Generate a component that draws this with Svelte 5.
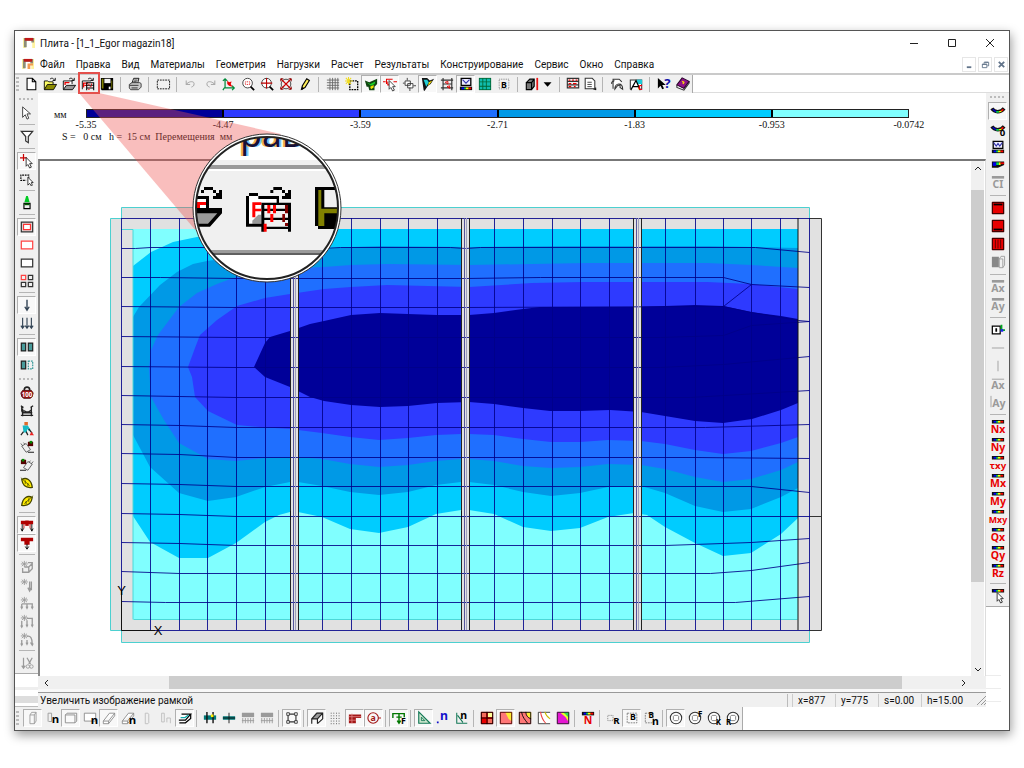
<script>
  // icon parts: fill, stroke and text, all on a 16x16 grid
  const f = (d, fill) => ({ d, fill, stroke: 'none', w: 0 });
  const s = (d, stroke = '#000', w = 1, fill = 'none') => ({ d, fill, stroke, w });
  const t = (text, x, y, color = '#000', size = 9) => ({ text, x, y, color, size });

  const red = '#e80000';
  const gray = '#9a9a9a';

  const arrow = 'M3 1v12l3-3 2 5 2-1-2-5h4z';
  const smallArrow = 'M7 4v10l2-2 2 4 2-1-2-4h3z';
  const folder = [s('M1.5 14V4.5h4l1 1h5V8', '#000', 1, '#ff6'), s('M1.5 14.500L5 8.500h10.500L12 14.500z', '#000', 1, '#8a8a00'), s('M8 2.500c2-2 4-1 5 1M11 4h3V1')];
  const folderRed = [s('M1.5 14V4.500h10V8', '#000', 1, '#fff'), s('M3.500 9V6.500h5', red, 1.500), s('M1.500 14.500L5 9.500h10.500L12 14.500z', '#000', 1, '#999'), s('M8 2.500c2-2 4-1 5 1M11 4h3V1')];
  const rainbow = (y) => [f(`M1 ${y}h14v4H1z`, '#111'), f(`M3 ${y + 1}h3v2H3z`, '#00f'), f(`M6 ${y + 1}h2v2H6z`, '#0c6'), f(`M8 ${y + 1}h3v2H8z`, '#ff0'), f(`M11 ${y + 1}h3v2h-3z`, '#f00')];
  const result = (label, size = 12) => [...rainbow(0), t(label, 8, 15, red, size)];
  const swoosh = [s('M1 5c3 5 10 5 14 0', '#111', 4), s('M2 6c2 2 3 3 5 3', '#00c', 1.500), s('M6 9h3', '#0c4', 2), s('M9 9c2 0 3-1 4-2', '#ff0', 1.500), s('M12 8l2-2', '#f00', 2)];
  const ghostBox = s('M4.500 4.500h5v10h-5zM4.500 4.500l2-3h5v10l-2 3M9.500 4.500l2-3', '#999');
  const slab = s('M1.500 4.500h11v9h-11zM1.500 4.500l2-2h11v9l-2 2', '#888', 1, '#fafafa');
  const slope = s('M1.500 11.500l7-9h6v3l-7 9h-6zM1.500 11.500h6l7-9M7.500 11.500v3', '#888', 1, '#fff');
  const frame = f('M1 3h14v4h-3v5h-1V7H5v5H4V7H1z', '#b00000');
  const lens = [s('M2 7a5.500 5.500 0 1 0 11 0a5.500 5.500 0 1 0-11 0', '#333', 1, '#fff'), s('M11 11l4 4', '#000', 2)];
  const ghostLoad = (d) => [s('M2 2l6 5M8 2L2 7M5 1v7M1 4.500h8', gray), s(d, gray, 1.5)];
  const dozer = [s('M1 4l7 9M4 3l7 8', '#555', 1, '#eee'), s('M2 7l5-3 5 7-5 3z', '#555', 1, '#eee'), s('M9 14h7'), f('M9 2h6v5H9z', '#500'), f('M11 1h3v3h-3z', '#080')];
  const leaf = [s('M2 4c5-3 11 0 12 9C7 14 3 11 2 4z', '#440', 1.500, '#ffeb00'), s('M1 2l10 9M6 5v4M9 8v4', '#550')];
  const calc = [f('M1 1h14v14H1z', red), s('M1.500 1.500h13v13h-13z')];
  const ring = [s('M1.500 8a6.500 6.500 0 1 0 13 0a6.500 6.500 0 1 0-13 0', '#333', 1.200, '#fff'), s('M6 5h4l1 1v4l-1 1H6l-1-1V6z', '#777')];
  const bigFrame = (color) => s('M1.500 3.500h13v9h-13z', color, 1.400, '#fff');

  const icons = {
    new: [s('M3.500 1.500h6l4 4v9h-10zM9.500 1.500v4h4', '#000', 1.200, '#fff')],
    open: folder,
    openRed: folderRed,
    openGrid: [s('M1.500 14V4.500h10', '#000', 1, '#fff'), s('M3 12V7h5M4 9.500h3', red, 1.500), s('M6.500 6v9M14.500 6v9M6 6.500h9M6 9.500h9M6 12.500h9', '#000', 1.200), s('M9 7.500v2M12 7.500v2M10 11h2M8 14h2', red), s('M8 2.500c2-2 4-1 5 1M11 4h3V1')],
    save: [f('M1 1h14v14H2l-1-1z', '#000'), f('M2 2h2v11H2zM13 4h1v9h-1z', '#808000'), f('M5 2h7v5H5z', '#f4f4f4'), f('M10 11h2v3h-2z', '#fff')],
    print: [s('M4.500 7l2-5.500h6L11 7', '#000', 1, '#fff'), s('M1.500 8.500l3-2h9l1.500 1v4l-3 3h-9l-1.500-2z', '#333', 1, '#ccc'), s('M2 9.500h10M4 12.500h7', '#222'), s('M7 3.500h4M6 5.500h4')],
    marquee: [{ ...s('M1.500 3.500h14v10h-14z'), dash: '2 1' }],
    undo: [s('M2.500 4v4.500H7M2.500 8.500c3-4 9-4 9-1s-1 3-3 4', gray, 1)],
    redo: [s('M13.500 4v4.500H9M13.500 8.500c-3-4-9-4-9-1s1 3 3 4', gray, 1)],
    axes: [s('M3.500 2v10.500h10M1 4.500L3.500 2 6 4.500M3 12l-2 3M11.500 10l2.500 2.500-2.500 2.500', '#008a3a', 1.400), f('M6 4l2 2 3-1-1 3 2 3-4-1-2-2z', red)],
    zoom: [...lens, { ...s('M5 5.500h5v3H5z', '#d00'), dash: '1 1' }],
    zoomAll: [...lens, s('M1 7h13M7.500 1v12', '#b00', 1.200)],
    zoomOut: [s('M2.500 8a5 5 0 1 0 11 0a5 5 0 1 0-11 0', '#333'), s('M2 2l12 12M14 2L2 14', '#c00', 1.300), s('M2 2h3M2 2v3M14 2h-3M14 2v3M2 14h3M2 14v-3M14 14h-3M14 14v-3', '#700')],
    pencil: [s('M4 14l1-4 5-8 3 2-5 8z', '#000', 1.300, '#ffef5a'), f('M4 15l1-4 2 2z', '#000')],
    grid: [s('M4.500 1v14M7.500 1v14M10.500 1v14M13.500 1v14M1 3.500h14M1 6.500h14M1 9.500h14M1 12.500h14', '#666')],
    gridNew: [{ ...s('M5.500 4.500h9v10h-9z', '#000', 1.500), dash: '2 1' }, s('M4 0v9M0 4.500h9M1 1l6 7M7 1L1 8', '#f0dc20', 1.200)],
    model: [f('M1 4l5 2 9-4v6l-3 3v4H6l-1-4H3z', '#141'), f('M3 6l4 2 6-3-1 3-4 2z', '#19d024'), f('M7 11l4-2v3l-3 2z', '#f2e400')],
    nodePick: [s('M0 5.500h3M12 5.500h4M4 8V2.500h7', red, 1.200), s('M5.500 5v4h2', red, 1.200), s(smallArrow, '#333', 1, '#fff')],
    nodeShape: [s('M3.500 4.500h6v5h-6zM6.500 7.500h6v5h-6z', '#333', 1, '#fff'), s('M1 7h2M13 10h3M6 1v3M9 12v4', '#333')],
    flag: [f('M1 1h6l3 3 5-2-4 6-3 2-4 6-1-1z', '#111'), f('M3 3h4l2 3-3 5z', '#23cdd6'), f('M9 6l4-2-3 4-2 2z', '#ffe600')],
    frames: [s('M3.500 1v14M13.500 1v14M1 3.500h14M1 12.500h14M3 8h10', '#333', 1.300), s('M6 6l3-1v3zM8 11l3-1v3z', red)],
    scale: [s('M2.500 1.500h11v8h-11z', '#000', 1.500, '#eef'), s('M4 3l4 4 4-4', '#33a', 1.300), ...rainbow(11)],
    mesh: [f('M1 1h14v14H1z', '#063'), f('M2 2h3v3H2zM6 2h3v3H6zM10 2h4v3h-4zM2 6h3v4H2zM6 6h3v4H6zM10 6h4v4h-4zM2 11h3v3H2zM6 11h3v3H6zM10 11h4v3h-4z', '#10bcae')],
    blockB: [{ ...s('M2.500 2.500h11v11h-11z', '#777'), dash: '1 1' }, t('B', 8, 12, '#000', 10)],
    cube: [s('M1.500 6.500h6v8h-6zM1.500 6.500l4-4h5v8l-3 4M7.500 6.500l3-4', '#000', 1.300, '#777'), f('M13 1h2v14h-2z', '#ee1515')],
    drop: [f('M3 6h9l-4.500 5z', '#000')],
    spec: [s('M1.500 1.500h13v11h-13zM1 5h14M1 9h14', '#333', 1.300), s('M3 3.500h2M7 3.500h2M11 3.500h2M3 7.500h3M8 7.500h4M3 11h3M9 11h2', red, 1.500)],
    report: [s('M2.500 1.500h8l3 3v9h-11z', '#333', 1.200, '#fff'), s('M5 6h5M5 8.500h5M5 11h5', '#333'), s('M12 14h3M14.500 12v3')],
    copyView: [s('M3.500 13.500V2.500h7l3 3', '#333', 1.200, '#fff'), s('M2 8v-2l3-2', '#333', 1.200), s('M5.500 14c0-8 9-8 9 0l-3-2v-3l-3 1z', '#333', 1.200, '#fff')],
    compass: [s('M1.500 14V3.500h13V14', '#333', 1.200, '#fff'), f('M9 3h6v5H9z', '#19c9d8'), s('M2 15L8 4l5 11M4 11h7', '#000', 1.400), t('c', 13, 15, red, 10)],
    help: [f('M1 1v12l3-3 2 4 2-1-2-4h4z', '#000'), t('?', 12, 12, '#1111a8', 15)],
    book: [s('M1 9v3l8 3 6-8V5', '#333', 1.200, '#fff'), s('M1 9l6-8 8 4-6 8z', '#2a002a', 1.200, '#8e1388'), s('M7 5l2 1-1 2', '#ffe100', 1.500)],

    cursor: [s(arrow, '#333', 1, '#fff')],
    filter: [s('M1.500 1.500h13l-5 6v7l-3-2v-5z', '#333', 1.400, '#fff')],
    pickNode: [s('M4 0v8M0 4.500h8', '#c00', 1.400), s(smallArrow, '#222', 1, '#fff')],
    pickRect: [{ ...s('M10 7V3.500H1v6h6', '#000', 1.300), dash: '2 1' }, s('M9 6v9l2-2 2 3 1-1-1-3h2z', '#222', 1, '#fff')],
    brush: [f('M7 0h2l2 7H5z', '#0c2'), s('M4.500 8.500h7v6h-7z', '#000', 1.300, '#eee'), s('M5 9.500h6', '#050', 2)],
    plateHole: [s('M1.500 2.500h13v11h-13z', '#333', 1.400, '#ddd'), s('M4 5h8v6H4z', '#f33', 1.400, '#fff')],
    plateRed: [bigFrame('#f44')],
    plate: [bigFrame('#333')],
    plates: [s('M1.500 1.500h5v5h-5z', '#f44', 1.400), s('M9.500 1.500h5v5h-5zM1.500 9.500h5v5h-5zM9.500 9.500h5v5h-5z', '#333', 1.400)],
    load: [s('M8 2v12M5.500 10L8 14l2.500-4', '#345', 1.600)],
    loads: [s('M3 2v12M1 11l2 3 2-3M8 2v12M6 11l2 3 2-3M13 2v12M11 11l2 3 2-3', '#345', 1.300)],
    pair: [s('M1.500 3.500h5v9h-5zM9.500 3.500h5v9h-5z', '#222', 1.400, '#489b9b')],
    pairCut: [s('M1.500 3.500h5v9h-5z', '#222', 1.400, '#489b9b'), { ...s('M9.500 3.500h5v9h-5z', '#3a9a9a', 1.400), dash: '2 1' }],
    weight: [s('M5 5c-1-5 7-5 6 0', '#222', 2), s('M3 5h10l2 3-1 4-2 2H4l-2-2-1-4z', '#400', 1, '#a31616'), t('100', 8, 12, '#fff', 7)],
    castle: [s('M2 3v5h3l2 1h3l3-2V3M2 10h12M1 13h14M3 5v9M13 5v9M1 2l3 2M15 2l-3 2', '#222', 1.500)],
    digger: [f('M5 0h4v4H5z', '#e06a2a'), f('M3 4h6l3 5-2 1-2-2v4H4z', '#17b9c4'), s('M4 11l-3 4M7 11l2 4M10 8l4 5', '#222', 1.400), f('M11 15l2-4 3 4z', '#e22')],
    dozer,
    dozerBack: dozer,
    leaf,
    leafBack: leaf,
    frameLoad: [frame, f('M6 3h4v6H6z', '#b00000'), s('M2.500 7v8M1 12l1.500 3L4 12M13.500 7v8M12 12l1.500 3 1.500-3')],
    tLoad: [f('M1 2h14v4h-4v4H5V6H1z', '#b00000'), s('M8 9v6M6 12l2 3 2-3')],
    gLoad1: ghostLoad('M3 9v5h7l4-4V3H9M10 14V8l4-4M5 8h5'),
    gLoad2: ghostLoad('M11 4v10M9 11l2 4 2-4M13 4v10'),
    gLoad3: ghostLoad('M2 9h12v5M8 9v5M2 9v5M1 12l1 2 1-2M7 12l1 2 1-2M13 12l1 2 1-2'),
    gLoad4: ghostLoad('M2 8v7M8 7v7M8 5h6v9M1 13l1 2 1-2M7 12l1 2 1-2M13 12l1 2 1-2'),
    gLoad5: ghostLoad('M2 9v5M8 9v5M8 5c4-1 6 2 6 9M1 13l1 2 1-2M7 12l1 2 1-2M12 12l2 3 1-2'),
    cutLoad: [s('M4 2v12M2 11l2 3 2-3M8 2l4 7M14 2l-4 7', gray, 1.400), s('M7 12a2 2 0 1 0 4 0a2 2 0 1 0-4 0M11 12a2 2 0 1 0 4 0a2 2 0 1 0-4 0', gray)],

    swoosh,
    swooshZero: [...swoosh, t('0', 13, 16, '#000', 11)],
    envelope: [s('M2.500 1.500h11v8h-11z', '#000', 1.500, '#eef'), s('M3 3l3 4 2-3 2 3 3-4', '#33a', 1.300), ...rainbow(11)],
    wedge: [f('M1 4h14v4l-7 3H1z', '#111'), f('M2 5h4v4H2z', '#00e'), f('M6 5h3v3H6z', '#0d5'), f('M9 5h2v3H9z', '#fe0'), f('M11 5h4v2h-4z', '#e00')],
    ci: [f('M1 0h14v3H1z', gray), t('CI', 8, 14, gray, 12)],
    topBars: [...calc, s('M3 4h10', '#000', 2)],
    bottomBars: [...calc, s('M3 12h10', '#000', 2)],
    sideBars: [...calc, s('M5 3v10M8 3v10M11 3v10', '#500')],
    greyBox: [f('M1 2h8v12H1z', '#888'), s('M9.500 4.500h4v10h-4zM9.500 4.500l2-3h4v10l-2 3', gray)],
    axTop: [f('M1 0h14v3H1z', gray), t('Ax', 8, 14, gray, 12)],
    ayTop: [f('M1 0h14v3H1z', gray), t('Ay', 8, 14, gray, 12)],
    lBox: [s('M1.500 3.500h9v9h-9z', '#000', 1.400, '#fff'), f('M5 6h2v4H5z', '#000'), s('M12 2v6h4', '#0a2', 2), f('M11 7h3v3h-3z', '#22e')],
    lineH: [s('M1 8h14', gray)],
    lineV: [s('M8 2v12', gray)],
    axBar: [s('M1 2.500h14', gray), t('Ax', 8, 14, gray, 12)],
    ayBar: [s('M0 1v13', gray), t('Ay', 9, 14, gray, 12)],
    nx: result('Nx'), ny: result('Ny'), txy: result('τxy', 11), mx: result('Mx'), my: result('My'),
    mxy: result('Mxy', 10), qx: result('Qx'), qy: result('Qy'), rz: result('Rz'),
    pickResult: [...rainbow(0), s(smallArrow, '#222', 1, '#fff')],

    col: [ghostBox],
    colN: [s('M3.500 12V2.500h4v9M4 12h4', '#999'), t('n', 12, 14, '#000', 13)],
    slab: [slab],
    slabN: [s('M1.500 2.500h13v9h-13z', '#888', 1, '#fff'), t('n', 13, 15, '#000', 13)],
    beam: [slope],
    beamN: [slope, t('n', 13, 15, '#000', 13)],
    pile: [s('M6 2.500h3l1 1v10l-1 1H6z', '#bbb')],
    pileN: [s('M3 2.500h3v10H3zM9 13V8h4v6', '#bbb')],
    layer: [s('M1.500 13.500h7l6-5v-5', '#000', 1.400, '#fff'), s('M4 3.500h10.500l-6 7H1', '#000', 1.400, '#fff'), s('M3 7.500h5l4-3', '#1aa', 1.500)],
    rebar1: [f('M1 5h14v5H1z', '#077'), s('M4.500 1v13M11.500 1v13', '#111', 1.600), f('M9 4h3v3H9z', '#fe0')],
    rebar2: [f('M1 6h14v4H1z', '#077'), s('M8 2v12M1 8h14', '#111')],
    rebar3: [f('M1 2h14v5H1z', gray), s('M2 8v6M5 8v6M8 8v6M11 8v6M14 8v6M1 11h14', gray)],
    corners: [s('M3.500 3.500h9v9h-9z', '#333', 1.300), s('M2 2h3v3H2zM11 2h3v3h-3zM2 11h3v3H2zM11 11h3v3h-3z', '#333', 1, '#fff')],
    arch: [f('M1 9l6-7h8l-6 7z', '#999'), s('M2 14.500V9l6-6.500h6.500V9M2 9h6.500v5.500M8.500 9l6-6.500M8.500 14.500l6-5.500', '#222', 1.300)],
    dots: [{ ...s('M2 2.500h12M2 5.500h12M2 8.500h12M2 11.500h12M2 14.500h12', '#444'), dash: '1 2' }],
    hatch: [f('M1 4h14v4H9v6H1z', '#a31818'), s('M1 6.500h14M1 10.500h8M4.500 3v11', '#e08080')],
    at: [s('M1 8a6 6 0 1 0 12 0a6 6 0 1 0-12 0M13 8h3', '#a31818', 1.300), t('a', 7, 11, '#a31818', 10)],
    forces: [s('M1 8V3h13v4M8 3v11M5 7h6M6 11l2 3 2-3', '#070', 1.600), t('F', 13, 15, '#000', 10)],
    triangle: [s('M2 1v13h13z', '#175', 1.300, '#cfe8cf'), s('M5 7v4h4z', '#175')],
    dotN: [f('M1 12h2v2H1z', '#11c'), t('n', 9, 10, '#11c', 14)],
    angleN: [s('M2 2v12h12M3 5l6 8', '#175', 1.200), t('n', 10, 9, '#000', 12)],
    map1: [f('M1 1h14v14H1z', red), f('M9 2h5v5H9z', '#ff9'), f('M2 2h5v5H2zM9 9h5v5H9z', '#f46d5d'), s('M1.500 1.500h13v13h-13zM8 1v14M1 8h14')],
    map2: [f('M1 1h14v14H1z', '#f77'), f('M7 1h8v11l-4-3-2-4z', '#fe3'), s('M1.500 1.500h13v13h-13z', '#400')],
    map3: [f('M1 1h14v14H1z', '#f77'), f('M9 1h6v8l-4-3z', '#fe3'), s('M4 1c1 6 4 9 7 13M9 1c0 5 3 7 6 8M1.500 1.500h13v13h-13z')],
    map4: [s('M15 1.500H1.500v13H15', '#333', 1, '#fff'), s('M4 1c1 6 3 10 6 13', '#e44', 1.200), s('M9 1c1 4 3 6 6 8', '#cb0', 1.200)],
    map5: [f('M1 1h14v14H1z', '#e516d2'), f('M5 2h9v10l-3-5z', '#ef2'), f('M8 1h7v7z', '#3d5'), s('M1.500 1.500h13v13h-13z', '#222')],
    resultN: [...rainbow(1), t('N', 8, 15, red, 12)],
    circleR: [{ ...s('M2 5h6v6H2z', '#777'), dash: '1 1' }, t('R', 12, 15, '#000', 11)],
    boxB: [{ ...s('M2.500 2.500h11v11h-11z', '#777'), dash: '2 1' }, t('B', 9, 10, '#000', 10)],
    boxBn: [{ ...s('M1.500 2.500h9v11h-9z', '#777'), dash: '2 1' }, t('B', 8, 8), t('n', 13, 16, '#000', 12)],
    ring,
    ringF: [...ring, t('F', 14, 7)],
    ringK: [...ring, t('K', 13, 16)],
    ringR: [...ring, t('R', 3, 16)]
  };

  // '|' is a separator, '*' marks a pressed button
  function parse(list) {
    return list.split(' ').map((name) => {
      if (name === '|') return { sep: true };
      return { name: name.replace('*', ''), on: name.endsWith('*') };
    });
  }

  let topTools = $state(parse('new open openRed openGrid save | print | marquee | undo redo axes zoom zoomAll zoomOut pencil | grid gridNew model* nodePick* nodeShape flag* frames scale* mesh blockB | cube drop | spec report | copyView compass | help book'));
  let leftTools = $state(parse('cursor | filter | pickNode* pickRect | brush | plateHole* plateRed plate plates | load* loads | pair* pairCut'));
  let leftTools2 = $state(parse('weight castle digger dozer dozerBack leaf leafBack | frameLoad* tLoad* | gLoad1 gLoad2 gLoad3 gLoad4 gLoad5 | cutLoad'));
  let rightTools = $state(parse('swoosh* swooshZero envelope wedge ci | topBars bottomBars sideBars greyBox | axTop ayTop | lBox lineH lineV axBar ayBar | nx ny txy mx my mxy qx qy rz | pickResult'));
  let bottomTools = $state(parse('col* colN slab* slabN beam* beamN pile pileN layer* | rebar1 rebar2 rebar3 rebar3 | corners* | arch* dots hatch* at* | forces* | triangle* dotN angleN | map1 map2* map3 map4 map5 | resultN | circleR boxB* boxBn | ring* ringF ringK ringR'));

  const menu = ['Файл', 'Правка', 'Вид', 'Материалы', 'Геометрия', 'Нагрузки', 'Расчет', 'Результаты', 'Конструирование', 'Сервис', 'Окно', 'Справка'];

  const colors = ['#000099', '#2e3aff', '#1f6fff', '#0099e6', '#00ccff', '#80ffff'];
  const levels = ['-5.35', '-4.47', '-3.59', '-2.71', '-1.83', '-0.953', '-0.0742'];
  const readings = ['x=877', 'y=775', 's=0.00', 'h=15.00'];

  // deflection zones, from the outer one to the deepest
  const zones = [
    { color: colors[4], points: '133,266 151,252 173,242 197,237 230,229 798,229 798,518 781,534 751,553 723,556 695,543 665,527 647,515 634,513 608,517 580,528 551,531 523,527 494,514 469,510 461,510 436,514 408,527 379,533 350,529 322,517 298,512 290,512 279,515 265,522 236,543 208,558 179,558 150,542 133,516' },
    { color: colors[3], points: '133,317 139,307 160,285 177,272 193,264 207,261 265,253 324,249 351,247 380,246 469,247 567,246 708,246 755,247 798,248 798,488 781,497 751,509 723,512 695,506 665,493 641,486 633,486 608,487 580,493 551,496 523,492 494,485 469,482 461,482 436,485 408,492 379,495 350,492 322,486 298,482 290,482 265,487 236,497 208,501 179,493 150,467 133,435' },
    { color: colors[2], points: '149,368 151,350 158,335 179,307 197,293 217,284 233,278 265,272 298,268 324,267 351,265 387,264 469,265 532,264 587,263 707,263 751,265 798,268 798,462 781,470 751,479 723,482 695,477 665,469 641,465 608,464 580,467 551,468 523,466 494,461 469,459 461,459 436,461 408,465 379,467 350,464 322,459 298,457 290,457 265,458 236,461 208,459 179,443 164,420 151,397' },
    { color: colors[1], points: '188,367 195,348 200,335 217,320 237,306 265,298 290,294 324,289 351,287 387,285 469,287 532,283 583,282 707,282 751,284 798,289 798,437 781,443 751,451 723,454 695,450 665,444 641,441 608,440 580,442 551,442 523,439 494,435 469,434 461,434 436,435 408,438 379,440 350,437 322,433 290,429 260,427 237,425 208,411 195,397 192,377' },
    { color: colors[0], points: '254,367 265,343 270,337 290,331 310,324 324,321 351,315 380,313 408,314 437,315 469,315 494,313 523,309 540,307 633,307 665,306 695,305 723,306 751,312 781,316 798,319 798,403 781,410 752,419 723,423 695,421 665,416 641,412 610,410 580,411 550,411 523,408 494,404 469,402 437,403 408,406 380,407 351,405 324,401 310,397 290,387 265,377' }
  ];

  const columns = [150, 179, 207, 236, 265, 322, 351, 380, 408, 437, 494, 523, 552, 580, 609, 665, 695, 723, 751, 780];
  const ribs = [290, 461, 633];
  const rows = [
    '121,218 809,218',
    '121,248 135,248 150,247 208,247 236,248 322,248 340,247 450,247 465,248 480,247 755,247 809,252',
    '121,277 160,277 236,278 465,278 540,277 723,277 751,284 809,287',
    '121,306 236,307 465,307 723,306 751,312 798,320 809,321',
    '121,336 236,337 660,337 723,335 751,325 809,321',
    '121,366 236,367 660,367 723,364 809,356',
    '121,395 236,397 690,397 809,390',
    '121,424 179,425 236,427 705,427 809,424',
    '121,453 179,454 236,457 695,457 809,458',
    '121,483 179,484 236,486 751,486 809,492',
    '121,513 179,514 236,516 809,516',
    '121,542 179,543 236,545 665,545 751,542 809,538',
    '121,571 179,573 710,573 751,570 809,562',
    '121,601 165,602 735,602 809,596',
    '121,630 809,630'
  ];
</script>

{#snippet icon(name)}
  <svg class="icon" class:flip={name.endsWith('Back')} viewBox="0 0 16 16" aria-hidden="true">
    {#each icons[name] as part}
      {#if part.text}
        <text x={part.x} y={part.y} fill={part.color} font-size={part.size} text-anchor="middle">{part.text}</text>
      {:else}
        <path d={part.d} fill={part.fill} stroke={part.stroke} stroke-width={part.w} stroke-dasharray={part.dash} />
      {/if}
    {/each}
  </svg>
{/snippet}

{#snippet buttons(tools)}
  {#each tools as tool}
    {#if tool.sep}
      <span class="sep"></span>
    {:else}
      <button class="tool {tool.name}" class:on={tool.on} aria-label={tool.name} onclick={() => (tool.on = !tool.on)}>
        {@render icon(tool.name)}
      </button>
    {/if}
  {/each}
{/snippet}

{#snippet logo(tail)}
  <svg class="logo" viewBox="0 0 13 13" aria-hidden="true">
    <path d="M0 1h3v11H0zM10 1h3v11h-3z" fill="#fff3a0" />
    <path d="M1 1h11v5h-3V4H4v7H1z" fill="#8d8d78" />
    <path d="M2 1h9v3H2z" fill="#c01818" />
    {#if tail}<path d="M6 6h6v2H9v4H6z" fill="#f29b50" />{/if}
  </svg>
{/snippet}

<div class="desktop">
  <main class="window">
    <header class="titlebar">
      {@render logo(false)}
      <span class="title">Плита - [1_1_Egor magazin18]</span>
      <button aria-label="Свернуть"><svg viewBox="0 0 10 10"><path d="M1 5.500h8" /></svg></button>
      <button aria-label="Развернуть"><svg viewBox="0 0 10 10"><path d="M1.500 1.500h7v7h-7z" /></svg></button>
      <button aria-label="Закрыть"><svg viewBox="0 0 10 10"><path d="M1 1l8 8M9 1L1 9" /></svg></button>
    </header>

    <nav class="menu">
      {@render logo(true)}
      {#each menu as item}
        <button>{item}</button>
      {/each}
      <div class="mdi">
        <button aria-label="Свернуть документ"><svg viewBox="0 0 10 10"><path d="M2 8h5" stroke-width="2" /></svg></button>
        <button aria-label="Восстановить документ"><svg viewBox="0 0 10 10"><path d="M3.500 4V2.500h5v4H7M1.500 4.500h5v4h-5zM1.500 5h5M4 2.500h4" /></svg></button>
        <button aria-label="Закрыть документ"><svg viewBox="0 0 10 10"><path d="M2 2l6 6M8 2L2 8" stroke-width="2" /></svg></button>
      </div>
    </nav>

    <div class="bar top">
      <div class="strip">
        <span class="grip"></span>
        {@render buttons(topTools)}
      </div>
    </div>

    <div class="work">
      <aside class="dock left">
        <div class="stack">
          <span class="grip"></span>
          {@render buttons(leftTools)}
          <span class="grip second"></span>
          {@render buttons(leftTools2)}
        </div>
        <div class="rest"></div>
      </aside>

      <section class="document">
        <div class="legend">
          <span class="unit">мм</span>
          <div>
            <div class="band">
              {#each colors as color}
                <i style="background: {color}"></i>
              {/each}
            </div>
            <div class="levels">
              {#each levels as level}
                <span>{level}</span>
              {/each}
            </div>
          </div>
          <p>S =&nbsp;&nbsp; 0 см&nbsp;&nbsp; h =&nbsp; 15 см&nbsp; Перемещения&nbsp; мм</p>
        </div>

        <div class="view">
          <div class="canvas">
            <svg class="plan" width="714" height="440" viewBox="109 205 714 440">
              <path d="M121.500 207.500h688v11h12v412h-12v12h-688v-12h-11v-412h11z" fill="#e1e1e1" />
              <path d="M809.500 218.500v-11h-688v11h-11v412h11v12h688v-12" fill="none" stroke="#4cd0d0" />
              <path d="M809 218.500h12.500v412H809M809 516.500h12" fill="none" stroke="#333" />
              <rect x="133" y="229" width="665" height="390" fill="#80ffff" />
              {#each zones as zone}
                <polygon points={zone.points} fill={zone.color} />
              {/each}
              <path d="M133.500 619.500h664M121 229.500h12v390" fill="none" stroke="#4cd8d8" />
              {#each ribs as x}
                <rect {x} y="218" width="9" height="412" fill="#e1e1e1" />
              {/each}
              <g class="lines">
                {#each columns as x}
                  <path d="M{x + 0.5} 218v412" />
                {/each}
                {#each rows as points}
                  <polyline {points} transform="translate(.5 .5)" />
                {/each}
                <path d="M121.500 218v412M809.500 218v412M723.500 306.500l28-22" />
              </g>
              {#each ribs as x}
                <path d="M{x + 0.5} 218v412M{x + 8.5} 218v412" stroke="#222" />
                <path d="M{x + 3.5} 218v412" stroke="#55559c" />
                <path d="M{x + 5.5} 218v412" stroke="#a0a0bc" />
              {/each}
              <path d="M798 218v412M121.500 590v40.500H155M290.500 511v9M461.500 511v9" fill="none" stroke="#111" />
              <text x="121.500" y="595" text-anchor="middle">Y</text>
              <text x="158" y="635" text-anchor="middle">X</text>
            </svg>
          </div>
          <div class="vscroll">
            <button aria-label="Вверх"><svg viewBox="0 0 10 10"><path d="M2 7l3-3 3 3" /></svg></button>
            <span class="thumb"></span>
            <span class="gap"></span>
            <button aria-label="Вниз"><svg viewBox="0 0 10 10"><path d="M2 3l3 3 3-3" /></svg></button>
          </div>
        </div>
        <div class="hscroll">
          <button aria-label="Влево"><svg viewBox="0 0 10 10"><path d="M6 2L3 5l3 3" /></svg></button>
          <span class="lead"></span>
          <span class="thumb"></span>
          <span class="gap"></span>
          <button aria-label="Вправо"><svg viewBox="0 0 10 10"><path d="M4 2l3 3-3 3" /></svg></button>
        </div>
        <footer class="status">
          <span class="hint">Увеличить изображение рамкой</span>
          {#each readings as reading}
            <span class="cell">{reading}</span>
          {/each}
          <svg class="size" viewBox="0 0 10 10"><path d="M1 10l9-9M5 10l5-5M8 10l2-2" stroke="#999" /></svg>
        </footer>
      </section>

      <aside class="dock right">
        <div class="stack">
          <span class="grip"></span>
          {@render buttons(rightTools)}
        </div>
        <div class="rest"></div>
      </aside>
    </div>

    <div class="bar bottom">
      <div class="strip">
        <span class="grip"></span>
        {@render buttons(bottomTools)}
      </div>
    </div>
  </main>

  <!-- callout: the highlighted tool under a magnifying glass -->
  <svg class="callout" width="360" height="300" viewBox="0 0 360 300" aria-hidden="true">
    <defs>
      <clipPath id="glass"><circle cx="267" cy="208" r="71" /></clipPath>
    </defs>
    <path d="M79 93h20l182 41-84 98z" fill="#ee5552" fill-opacity=".38" />
    <rect x="79" y="73" width="20" height="20" fill="none" stroke="#e4504c" stroke-width="2" />
    <circle cx="267" cy="208" r="74" fill="#fff" stroke="#333" />
    <g clip-path="url(#glass)">
      <path d="M190 160h160v95H190z" fill="#f0f0f0" />
      <path d="M190 165h160v4H190zM190 250h160v3H190z" fill="#9b9b9b" />
      <path d="M190 169h160v2H190z" fill="#fff" />
      <path d="M190 253h160v2H190z" fill="#606060" />
      <text class="big" x="240" y="147" fill="#171238">рав</text>
      <g transform="translate(100 130) scale(.3333)">
        <path d="M280 198h47v36h39v16l-36 40h-50z" />
        <path d="M280 207h38v27h-38z" fill="#fff" />
        <path d="M280 216h38v9h-18v9h-20z" fill="#f00" />
        <path d="M280 250h72l-28 31h-44z" fill="#9a9a9a" />
        <path d="M312 171h27v9h-27zM303 180h9v9h-9zM339 180h9v9h-9zM348 189h9v-9h9v27h-27v-9h9z" />
        <path d="M447 198h28v9h55v11h-46v72h-37z" fill="#fff" />
        <path d="M457 281v-9l18-18h9v27z" fill="#9a9a9a" />
        <path d="M520 171h26v9h-26zM511 180h9v9h-9zM546 180h9v9h9v-9h9v27h-27v-9h9v-9h-9zM447 189h27v9h63v20h36v87h-9v-8h-71v8h-9v-15h-46v-92h9v83h37v-63h46v-11h-55v-9h-28zM493 225v11h71v-11zM493 243v20h71v-20zM493 270v20h71v-20z" fill-rule="evenodd" />
        <path d="M457 217h27v8h-18v11h18v8h-18v18h-9zM502 225h9v25h-9zM519 225h9v25h-9zM511 252h9v24h-9zM491 281h9v24h-9z" fill="#f00" />
        <path d="M555 225h9v25h-9zM547 252h8v24h-8zM555 279h9v9h-9z" fill="#800000" />
        <path d="M645 171h85v126h-76v-9h-9z" />
        <path d="M655 180h9v108h-9zM664 236h60v14h-51v38h-9z" fill="#808000" />
        <path d="M673 180h45v52h-45z" fill="#f0f0f0" />
      </g>
    </g>
    <circle cx="267" cy="208" r="71" fill="none" stroke="#222" stroke-width="2" />
  </svg>
</div>

<style>
  :global(body) {
    margin: 0;
    background: #fff;
  }
  .desktop {
    position: relative;
    box-sizing: border-box;
    min-height: 100vh;
    padding: 30px 14px 37px;
    display: flex;
    font-family: Roboto, "Noto Sans", sans-serif;
    font-size: 10px;
    color: #111;
  }
  .window {
    flex: 1;
    min-width: 0;
    display: flex;
    flex-direction: column;
    background: #fff;
    border: 1px solid #555;
    box-shadow: 1px 4px 10px rgba(0, 0, 0, 0.4);
  }
  button {
    padding: 0;
    border: 0;
    background: none;
    font: inherit;
    color: inherit;
    display: flex;
    align-items: center;
    justify-content: center;
  }
  button svg {
    width: 10px;
    height: 10px;
    fill: none;
    stroke: #222;
  }

  /* Title and menu */
  .titlebar {
    display: flex;
    align-items: center;
    height: 24px;
    padding-left: 8px;
  }
  .title {
    flex: 1;
    margin-left: 5px;
  }
  .titlebar button {
    width: 38px;
    height: 24px;
  }
  .logo {
    width: 12px;
    height: 12px;
  }
  .menu {
    display: flex;
    align-items: center;
    gap: 11px;
    height: 18px;
    padding-left: 7px;
    border-bottom: 2px solid #cacaca;
  }
  .menu .logo {
    margin-right: -5px;
  }
  .mdi {
    display: flex;
    gap: 2px;
    margin-left: auto;
    margin-right: 1px;
  }
  .mdi button {
    width: 14px;
    height: 15px;
    border: 1px solid #e6e6e6;
    box-sizing: border-box;
  }
  .mdi svg {
    stroke: #62748a;
    width: 9px;
    height: 9px;
    flex: none;
  }

  /* Toolbars */
  .bar {
    display: flex;
    flex: none;
  }
  .strip {
    display: flex;
    align-items: center;
    height: 18px;
    background: #f0f0f0;
    border-right: 1px solid #aaa;
  }
  .bar .grip {
    width: 3px;
    height: 14px;
    margin: 0 2px 0 1px;
    background: repeating-linear-gradient(#bbb 0 2px, transparent 2px 4px);
  }
  .top::after {
    content: "";
    flex: 1;
    border-bottom: 1px solid #ddd;
  }
  .bar .tool {
    width: 19px;
    height: 18px;
  }
  .bar .sep {
    width: 1px;
    height: 15px;
    margin: 0 4px;
    background: #b5b5b5;
  }
  .bar .drop {
    width: 14px;
  }
  .bar .spec,
  .bar .report {
    width: 17px;
  }
  .bottom .strip {
    height: 22px;
    padding-bottom: 1px;
  }
  .bottom .grip {
    margin-right: 4px;
  }
  .bottom .sep {
    height: 17px;
    margin: 0 3px 0 2px;
  }
  .tool {
    box-sizing: border-box;
    border: 1px solid transparent;
    flex: none;
  }
  .tool.on {
    background: #f8f8f8;
    border-color: #b0b0b0 #fff #fff #b0b0b0;
  }
  .icon {
    width: 14px;
    height: 14px;
    flex: none;
    overflow: visible;
    stroke: none;
  }
  .icon text {
    font-family: "Noto Sans", sans-serif;
    font-weight: bold;
  }
  .flip {
    transform: scaleX(-1);
  }

  .work {
    flex: 1;
    display: flex;
    min-height: 0;
  }
  .dock {
    width: 23px;
    flex: none;
    display: flex;
    flex-direction: column;
  }
  .stack {
    display: flex;
    flex-direction: column;
    align-items: center;
    background: #f0f0f0;
    border-bottom: 1px solid #aaa;
    padding-bottom: 1px;
  }
  .dock .grip {
    width: 16px;
    height: 2px;
    margin: 5px 0 4px;
    background: repeating-linear-gradient(90deg, #bbb 0 2px, transparent 2px 4px);
  }
  .dock .second {
    margin: 4px 0;
  }
  .right .grip {
    margin: 3px 0 4px;
  }
  .dock .tool {
    width: 19px;
    height: 18px;
  }
  .dock .sep {
    width: 16px;
    height: 1px;
    margin: 2px 0 3px;
    background: #b5b5b5;
  }
  .right .sep {
    margin: 3px 0;
  }
  .left .rest {
    flex: 1;
    background: linear-gradient(#fff 0 40%, #eee 40% 50%, #fff 50% 70%, #ddd 70% 90%, #fff 90%);
    border-bottom: 1px solid #bbb;
  }
  .right .rest {
    height: 44px;
    margin: 56px 8px 0 0;
    background: repeating-linear-gradient(#fff 0 12px, #ececec 12px 13px);
  }

  /* Document */
  .document {
    flex: 1;
    min-width: 0;
    display: flex;
    flex-direction: column;
  }
  .legend {
    display: grid;
    grid-template-columns: 48px 1fr;
    align-content: start;
    height: 50px;
    padding: 16px 77px 0 0;
    font-family: "Liberation Serif", serif;
    line-height: 12px;
  }
  .unit {
    padding-left: 16px;
  }
  .band {
    display: flex;
    height: 9px;
    box-sizing: border-box;
    border: 1px solid #222;
  }
  .band i {
    flex: 1;
  }
  .band i + i {
    border-left: 2px solid #000;
  }
  .levels {
    display: flex;
    justify-content: space-between;
    padding-top: 1px;
  }
  .levels span {
    width: 0;
    display: flex;
    justify-content: center;
  }
  .legend p {
    grid-column: 1 / 3;
    margin: 0 0 0 24px;
    white-space: nowrap;
  }
  .view {
    flex: 1;
    display: flex;
    min-height: 0;
    border-top: 2px solid #777;
    border-left: 2px solid #888;
    border-right: 1px solid #ddd;
  }
  .canvas {
    flex: 1;
    min-width: 0;
    overflow: hidden;
    padding: 44px 0 0 69px;
  }
  .plan {
    display: block;
  }
  .plan text {
    font-family: "Liberation Sans", sans-serif;
    font-size: 13px;
  }
  .lines {
    fill: none;
    stroke: #000088;
    stroke-opacity: 0.85;
  }
  .vscroll,
  .hscroll {
    display: flex;
    background: #f0f0f0;
  }
  .vscroll {
    flex-direction: column;
    width: 13px;
    margin-right: 1px;
  }
  .vscroll button {
    height: 13px;
  }
  .vscroll .thumb {
    flex: 390;
    margin-top: 16px;
  }
  .vscroll .gap {
    flex: 80;
  }
  .thumb {
    background: #cdcdcd;
  }
  .hscroll {
    height: 13px;
    padding: 0 16px 0 2px;
    border-bottom: 3px solid #f8f8f8;
  }
  .hscroll button {
    width: 14px;
  }
  .hscroll .lead {
    flex: 115;
  }
  .hscroll .thumb {
    flex: 733;
  }
  .hscroll .gap {
    flex: 54;
  }
  .status {
    display: flex;
    align-items: center;
    height: 14px;
    line-height: 13px;
    background: #f0f0f0;
    border-top: 1px solid #999;
  }
  .hint {
    flex: 1;
    padding-left: 2px;
    margin-right: 4px;
    border-right: 1px solid #bbb;
  }
  .cell {
    box-sizing: border-box;
    width: 43px;
    padding-left: 5px;
    border-left: 1px solid #ccc;
  }
  .size {
    width: 10px;
    height: 10px;
    margin-left: 12px;
  }

  .callout {
    position: absolute;
    top: 0;
    left: 0;
    pointer-events: none;
  }
  .big {
    font-family: "Noto Sans", sans-serif;
    font-size: 36px;
    text-shadow: -2px 0 #f0b050, 2px 0 #7cc4f4;
  }
</style>
